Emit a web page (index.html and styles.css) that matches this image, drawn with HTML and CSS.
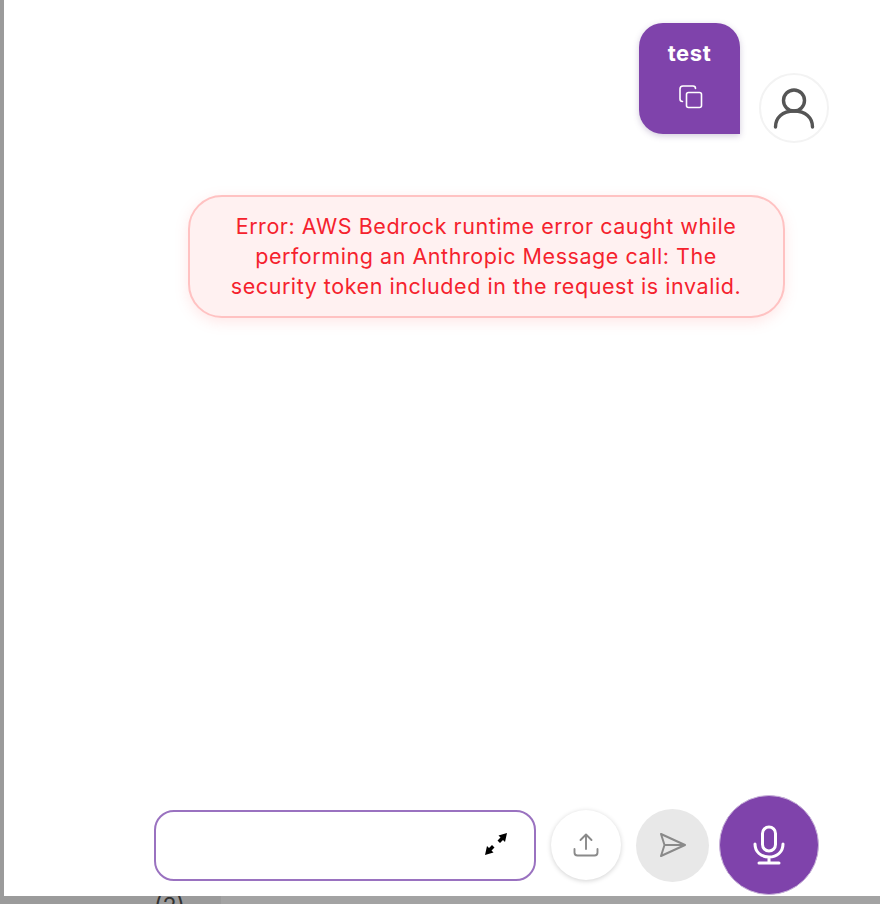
FILE: index.html
```html
<!DOCTYPE html>
<html lang="en">
<head>
<meta charset="utf-8">
<title>Chat</title>
<link rel="stylesheet" href="styles.css">
</head>
<body>
<div class="screen">
  <main class="chat">
    <section class="user-row">
      <div class="bubble">
        <span class="bubble-text">test</span>
        <svg class="copy-icon" viewBox="0 0 26 26" fill="none" stroke="currentColor" stroke-width="1.6" stroke-linecap="round" stroke-linejoin="round">
          <rect x="8.5" y="8.5" width="15" height="15" rx="2"/>
          <path d="M4.5 17.5C3 17.5 2 16.5 2 15V5c0-2 1-3 3-3h10c1.500 0 2.500 1 2.500 2.500"/>
        </svg>
      </div>
      <div class="avatar">
        <svg viewBox="0 0 44 44" fill="none" stroke="currentColor" stroke-width="3.400" stroke-linecap="round">
          <circle cx="22" cy="14.500" r="10.500"/>
          <path d="M3.500 41c0-9.500 7-16 18.500-16s18.500 6.500 18.500 16"/>
        </svg>
      </div>
    </section>
    <section class="error-row">
      <p class="error">Error: AWS Bedrock runtime error caught while performing an Anthropic Message call: The security token included in the request is invalid.</p>
    </section>
    <section class="composer">
      <div class="input">
        <svg class="expand-icon" viewBox="0 0 24 24" fill="currentColor">
          <path d="M23 1l-8.500 2.500 2 2-3 3 2.500 2.500 3-3 2 2zM1 23l8.500-2.500-2-2 3-3-2.500-2.500-3 3-2-2z"/>
        </svg>
      </div>
      <button class="btn upload" type="button" aria-label="Upload">
        <svg viewBox="0 0 26 26" fill="none" stroke="currentColor" stroke-width="1.900" stroke-linecap="round" stroke-linejoin="round">
          <path d="M13 17V2.500M7.500 8L13 2.500 18.500 8"/>
          <path d="M1.500 17v3.500c0 2 1 3 3 3h17c2 0 3-1 3-3V17"/>
        </svg>
      </button>
      <button class="btn send" type="button" aria-label="Send">
        <svg viewBox="0 0 28 26" fill="none" stroke="currentColor" stroke-width="2" stroke-linejoin="round">
          <path d="M2 2l24 11L2 24l3.500-11zM5.500 13H26"/>
        </svg>
      </button>
      <button class="btn mic" type="button" aria-label="Record">
        <svg viewBox="0 0 32 40" fill="none" stroke="currentColor" stroke-width="3" stroke-linecap="round" stroke-linejoin="round">
          <rect x="9.500" y="2" width="13" height="24" rx="6.500"/>
          <path d="M2 19c0 8 6 13 14 13s14-5 14-13M16 32v6M6 38h20"/>
        </svg>
      </button>
    </section>
  </main>
  <footer class="strip">
    <span class="strip-count">(2)</span>
    <span class="strip-rest"></span>
  </footer>
</div>
</body>
</html>
```

FILE: styles.css
```css
* { box-sizing: border-box; }
html, body { margin: 0; height: 904px; overflow: hidden; }
body { background: #9b9b9b; font-family: "Inter", "Noto Sans", sans-serif; }
.screen { height: 904px; display: flex; flex-direction: column; padding-left: 4px; overflow: hidden; }
.chat { height: 896px; flex: none; background: #fff; display: flex; flex-direction: column; }

.user-row { display: flex; justify-content: flex-end; align-items: flex-end; gap: 19px; padding: 23px 51px 0 0; }
.bubble { width: 101px; height: 111px; background: #7f43ab; color: #fff; border-radius: 24px 24px 0 24px; box-shadow: 0 2px 6px rgba(80, 50, 120, .25); display: flex; flex-direction: column; align-items: center; padding-top: 17px; }
.bubble-text { font-size: 22px; letter-spacing: .6px; line-height: 26px; font-weight: 700; }
.copy-icon { width: 26px; height: 26px; margin-top: 18px; margin-left: 2px; }
.avatar { width: 70px; height: 70px; margin-bottom: -9px; border-radius: 50%; background: #fff; border: 2px solid #f3f3f3; color: #555; display: flex; align-items: center; justify-content: center; }
.avatar svg { width: 44px; height: 44px; }

.error-row { display: flex; padding: 61px 0 0 183.500px; }
.error { width: 597px; height: 123px; margin: 0; padding: 14px 36px 0; background: #fff1f1; border: 2px solid #ffc2c2; border-radius: 34px; box-shadow: 0 4px 14px rgba(255, 120, 120, .18); color: #f5222d; font-size: 21.500px; letter-spacing: .55px; line-height: 30px; text-align: center; }

.composer { margin-top: auto; display: flex; align-items: center; padding: 0 0 1px 150px; }
.input { width: 382px; height: 71px; margin-right: 15px; border: 2px solid #9a72c0; border-radius: 20px; background: #fff; display: flex; align-items: center; justify-content: flex-end; padding: 0 26px 2px 0; color: #000; }
.expand-icon { width: 24px; height: 24px; }
.btn { padding: 0; border: 0; border-radius: 50%; display: flex; align-items: center; justify-content: center; }
.upload { width: 70px; height: 70px; margin-right: 15px; background: #fff; color: #8a8a8a; box-shadow: 0 1px 5px rgba(0, 0, 0, .18); }
.upload svg { width: 26px; height: 26px; }
.send { width: 73px; height: 73px; margin-right: 10px; background: #e8e8e8; color: #8a8a8a; }
.send svg { width: 28px; height: 26px; }
.mic { width: 100px; height: 100px; background: #7f43ab; color: #fff; border: 1px solid #c9b4da; }
.mic svg { width: 32px; height: 40px; }

.strip { flex: 1; margin-left: -4px; display: flex; background: #9b9b9b; overflow: hidden; }
.strip-count { width: 221px; padding-left: 154px; background: #9b9b9b; color: #333; font-size: 23px; line-height: 20px; margin-top: 0; height: 20px; }
.strip-rest { flex: 1; background: #a3a3a3; }
```
